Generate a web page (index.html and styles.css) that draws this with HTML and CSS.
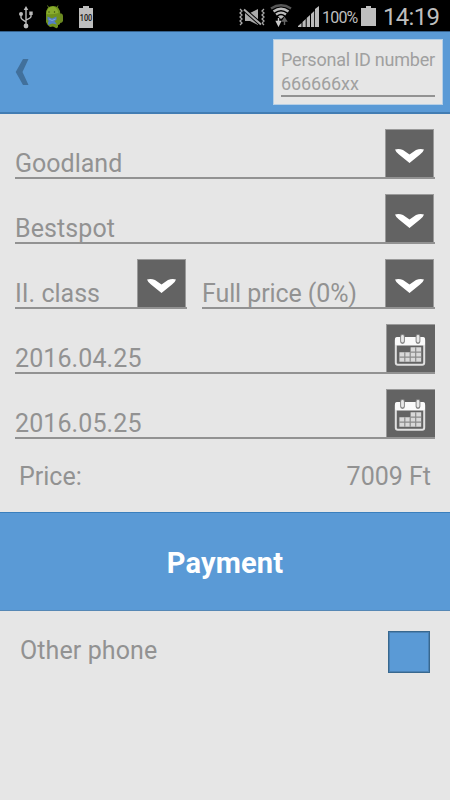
FILE: index.html
```
<!DOCTYPE html>
<html lang="en">

<head>
    <meta charset="UTF-8">
    <meta name="viewport" content="width=device-width, initial-scale=1.0">
    <link rel="stylesheet" href="styles.css">
    <title>Ticket purchase</title>
</head>

<body>
    <svg class="defs" width="0" height="0">
        <symbol id="arrow" viewBox="0 0 47 46">
            <path d="M9 19Q13 18 17 19.500L23.500 24L30 19.500Q34 18 38 19Q37 22 34 24L23.500 32.500L13 24Q10 22 9 19Z" fill="#fff"/>
        </symbol>
        <symbol id="calendar" viewBox="0 0 48 47">
            <rect x="8.800" y="13.300" width="28.400" height="26.400" rx="2" fill="none" stroke="#e0e0e0" stroke-width="2"/>
            <rect x="8" y="12" width="30" height="8.500" rx="2" fill="#fafafa"/>
            <path d="M15.500 11.500V16.500M31 11.500V16.500" stroke="#858585" stroke-width="4.800" stroke-linecap="round"/>
            <path d="M15.500 11.500V16M31 11.500V16" stroke="#e8e8e8" stroke-width="2.800" stroke-linecap="round"/>
            <path d="M23.600 22.300h10.600v14.400H12.400v-9.400h11.200z" fill="#d9d9d9"/>
            <path d="M12.400 32.200h21.800M23.400 27.200h10.800M17.800 27.300v9.400M23.200 27.300v9.400M28.700 22.300v14.400" stroke="#8a8a8a" stroke-width="1.200"/>
        </symbol>
    </svg>

    <div class="status-bar">
        <div class="status-left">
            <!-- usb -->
            <svg class="icon-usb" width="14" height="24" viewBox="0 0 14 24">
                <path d="M7 3V20M2 9.500V12.500Q2 14 7 17M12 9V11.500Q12 13 7 15" fill="none" stroke="#bbb" stroke-width="1.400"/>
                <path d="M7 1L9.300 5H4.700zM10.300 6.500h3.400v3.600h-3.400z" fill="#bbb"/>
                <circle cx="2" cy="9" r="2" fill="#bbb"/>
                <circle cx="7" cy="21" r="2.400" fill="#bbb"/>
            </svg>
            <!-- android robot -->
            <svg class="icon-robot" width="20" height="24" viewBox="0 0 20 24">
                <path d="M2.500 0.500L4 3M13 0.500L12 3" stroke="#62801e" stroke-width="1"/>
                <path d="M1 9Q1 1 8 1Q15 1 15.300 9V18Q15 20 13 20V22Q12 24 10 22.500L8 21.500L5 22Q2 20 1 17Z" fill="#6f911c"/>
                <path d="M1.500 9Q2 1.500 8 1.500Q12 2 13.500 8Q7 10 1.500 9Z" fill="#89ac2d"/>
                <path d="M15 8.500H16.500Q18 9 18 11V16Q17.500 18 15 18Z" fill="#6b8921"/>
                <circle cx="4" cy="7" r=".7" fill="#354712"/>
                <circle cx="9.500" cy="7" r=".7" fill="#354712"/>
                <path d="M2.500 11.500L7 13.500L11.500 11.500V15L9.500 16L12 19.500L7.500 18.500L3 20V17L4 16L2.500 15Z" fill="#537fc3"/>
                <path d="M4 14L7 15.500L10.500 14" fill="none" stroke="#8fb0df" stroke-width=".8"/>
            </svg>
            <!-- battery with level -->
            <svg class="icon-level" width="14" height="22" viewBox="0 0 14 22">
                <path d="M0 2H4V0H10V2H14V22H0Z" fill="#bebebe"/>
                <text class="level-text" x="7" y="14.500" text-anchor="middle" textLength="12.500" lengthAdjust="spacingAndGlyphs">100</text>
            </svg>
        </div>
        <div class="status-right">
            <!-- vibrate / muted -->
            <svg class="icon-mute" width="26" height="18" viewBox="0 0 26 18">
                <path d="M1 1L3 3L1 5L3 7L1 9L3 11L1 13L3 15L1 17M25 1L23 3L25 5L23 7L25 9L23 11L25 13L23 15L25 17" fill="none" stroke="#aaa" stroke-width="1.300"/>
                <path d="M6 5H11L19 1V17L11 13H6Z" fill="#aaa"/>
                <path d="M5 1.500L22 16.500" stroke="#000" stroke-width="4"/>
                <path d="M5 1.500L22 16.500" stroke="#aaa" stroke-width="2"/>
            </svg>
            <!-- wifi -->
            <svg class="icon-wifi" width="22" height="23" viewBox="0 0 22 23">
                <path d="M1 4.500Q11-2 21 4.500" fill="none" stroke="#555" stroke-width="2.400"/>
                <path d="M3.500 7.500Q11 2 18.500 7.500M6 10.500Q11 6.800 16 10.500" fill="none" stroke="#bbb" stroke-width="2.300"/>
                <path d="M8 12.500Q11 10 14 12.500L11 15Z" fill="#bbb"/>
                <path d="M8.500 14V18M6.500 17.500H10.500L8.500 21.500Z" fill="#ccc" stroke="#ccc" stroke-width="1.400"/>
                <path d="M14.500 21V17M12.500 17H16.500L14.500 14Z" fill="#666" stroke="#666" stroke-width="1.400"/>
            </svg>
            <!-- signal -->
            <svg class="icon-signal" width="21" height="21" viewBox="0 0 21 21">
                <path d="M0 21V20L3.500 17V21ZM4.500 21V16L7.700 13V21ZM8.700 21V12L12 9V21ZM13 21V8L16.200 5V21ZM17 21V3L21 0V21Z" fill="#bbb"/>
            </svg>
            <span class="percent">100%</span>
            <svg class="icon-battery" width="15" height="20" viewBox="0 0 15 20">
                <path d="M0 2H5V0H10V2H15V20H0Z" fill="#bebebe"/>
            </svg>
            <span class="clock">14:19</span>
        </div>
    </div>

    <div class="header">
        <svg class="back" width="14" height="28" viewBox="0 0 14 28">
            <path d="M8 1H13.500L7.500 14L13.500 27H8L0.700 14Z" fill="#41709c"/>
        </svg>
        <div class="id-box">
            <div class="id-label">Personal ID number</div>
            <div class="id-value">666666xx</div>
        </div>
    </div>

    <div class="form">
        <div class="field">
            <span class="text">Goodland</span>
            <svg class="button"><use href="#arrow"/></svg>
        </div>
        <div class="field">
            <span class="text text-wide">Bestspot</span>
            <svg class="button"><use href="#arrow"/></svg>
        </div>
        <div class="field-row">
            <div class="field field-class">
                <span class="text">II. class</span>
                <svg class="button"><use href="#arrow"/></svg>
            </div>
            <div class="field field-price">
                <span class="text text-narrow">Full price (0%)</span>
                <svg class="button"><use href="#arrow"/></svg>
            </div>
        </div>
        <div class="field">
            <span class="text text-wide">2016.04.25</span>
            <svg class="button button-date"><use href="#calendar"/></svg>
        </div>
        <div class="field">
            <span class="text text-wide">2016.05.25</span>
            <svg class="button button-date"><use href="#calendar"/></svg>
        </div>
    </div>

    <div class="price">
        <span>Price:</span>
        <span>7009 Ft</span>
    </div>

    <div class="payment">Payment</div>

    <div class="other">
        <span class="other-label">Other phone</span>
        <div class="checkbox"></div>
    </div>
</body>

</html>
```
FILE: styles.css
```
* {
    box-sizing: border-box;
    margin: 0;
    padding: 0;
}

body {
    width: 450px;
    height: 800px;
    overflow: hidden;
    background-color: #e6e6e6;
    color: #929292;
    font-family: Roboto, sans-serif;
    font-size: 25px;
    line-height: 28px;
}

svg {
    display: block;
    flex-shrink: 0;
}

.defs {
    display: none;
}

span {
    white-space: nowrap;
}

/* status bar */
.status-bar {
    height: 31px;
    background-color: #000;
    color: #bebebe;
    display: flex;
    justify-content: space-between;
}

.status-left {
    display: flex;
    padding: 5px 0 0 19px;
}

.icon-robot {
    margin-left: 12px;
}

.icon-level {
    margin: 1px 0 0 14px;
}

.level-text {
    font-size: 8.5px;
    font-weight: 500;
    fill: #111;
}

.status-right {
    display: flex;
    align-items: flex-start;
    padding-right: 11px;
}

.icon-mute {
    margin-top: 8px;
}

.icon-wifi {
    margin: 4px 0 0 5px;
}

.icon-signal {
    margin: 6px 0 0 6px;
}

.percent {
    width: 36px;
    margin: 4px 0 0 3px;
    font-size: 16px;
    letter-spacing: -0.8px;
}

.icon-battery {
    margin: 6px 0 0 3px;
}

.clock {
    width: 56px;
    margin: 3px 0 0 7px;
    font-size: 24px;
    letter-spacing: -0.7px;
}

/* header */
.header {
    height: 83px;
    padding: 8px 7px 0 15px;
    background-color: #5a9ad6;
    border-top: 1px solid #35618c;
    border-bottom: 2px solid #427db3;
    display: flex;
    justify-content: space-between;
}

.back {
    margin-top: 18px;
}

.id-box {
    width: 170px;
    height: 66px;
    margin-top: -1px;
    padding: 8px 7px 0;
    background-color: #e6e6e6;
    border: 1px solid #b5cfe6;
    font-size: 18px;
    line-height: 24px;
    color: #a0a0a0;
    white-space: nowrap;
}

.id-label {
    letter-spacing: -0.2px;
}

.id-value {
    height: 25px;
    border-bottom: 2px solid #929292;
    letter-spacing: -0.1px;
}

/* form fields */
.form {
    padding: 16px 15px 0;
    display: flex;
    flex-direction: column;
    gap: 16px;
}

.field-row {
    display: flex;
    justify-content: space-between;
}

.field {
    height: 49px;
    border-bottom: 2px solid #929292;
    display: flex;
    justify-content: space-between;
    align-items: flex-end;
}

.field-class {
    width: 172px;
}

.field-price {
    width: 233px;
}

.text {
    line-height: 26px;
}

.text-wide {
    letter-spacing: 0.1px;
}

.text-narrow {
    letter-spacing: -0.1px;
}

.button {
    width: 49px;
    height: 48px;
    margin-right: 1px;
    background-color: #636363;
    border: 1px solid #9a9a9a;
    border-bottom: none;
}

.button-date {
    margin-right: 0;
    border-right: none;
}

/* price */
.price {
    height: 73px;
    padding: 24px 19px 0;
    display: flex;
    justify-content: space-between;
}

.payment {
    height: 99px;
    background-color: #5a9ad6;
    border-top: 1px solid #3a7fbd;
    border-bottom: 1px solid #5688b5;
    color: #fff;
    font-size: 29px;
    font-weight: bold;
    line-height: 100px;
    letter-spacing: 0.2px;
    text-align: center;
}

.other {
    padding: 20px 20px 0;
    display: flex;
    justify-content: space-between;
}

.other-label {
    margin-top: 6px;
    letter-spacing: 0.1px;
}

.checkbox {
    width: 42px;
    height: 42px;
    background-color: #5a9ad6;
    border: 1px solid #38688f;
    box-shadow: inset 0 0 0 1px #4b82b5;
}
```
